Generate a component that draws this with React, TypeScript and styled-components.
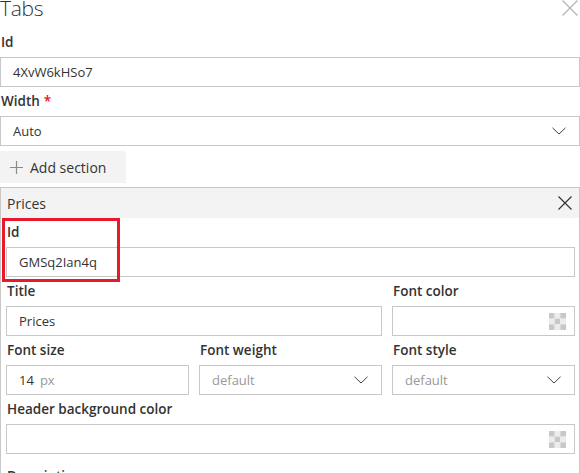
import React from "react";
import styled, { createGlobalStyle } from "styled-components";

const GlobalStyle = createGlobalStyle`
  html, body { margin: 0; padding: 0; background: #ffffff; }
  * { box-sizing: border-box; }
`;

const Page = styled.div`
  width: 580px;
  height: 473px;
  overflow: hidden;
  font-family: "Open Sans", "Noto Sans", sans-serif;
  color: #333333;
`;

const Header = styled.div`
  display: flex;
  justify-content: space-between;
  align-items: flex-start;
  margin-top: -6px;
  height: 38px;
`;

const Title = styled.h1`
  margin: 0;
  font-size: 21px;
  font-weight: 300;
  line-height: 28px;
  letter-spacing: -0.3px;
  color: #333333;
`;

const CloseBox = styled.div`
  margin-top: 5px;
  margin-right: 2px;
  display: block;
`;

const Field = styled.div<{ $extraTop?: number }>`
  margin-bottom: 4px;
  margin-top: ${(p) => p.$extraTop ?? 0}px;
  min-width: 0;
`;

const Label = styled.label`
  display: block;
  font-size: 13.5px;
  font-weight: 560;
  line-height: 20px;
  margin: 0 0 5px 1px;
  color: #333333;
  white-space: nowrap;
`;

const Required = styled.span`
  color: #e81123;
  margin-left: 4px;
`;

const Box = styled.div`
  height: 30px;
  border: 1px solid #c8c8c8;
  background: #ffffff;
  display: flex;
  align-items: center;
  padding: 0 8px 0 12px;
  font-size: 13px;
  color: #333333;
`;

const Value = styled.span<{ $muted?: boolean }>`
  flex: 1;
  color: ${(p) => (p.$muted ? "#999999" : "#333333")};
`;

const Unit = styled.span`
  color: #999999;
  margin-left: 6px;
`;

const AddButton = styled.button`
  display: flex;
  align-items: center;
  gap: 7px;
  height: 32px;
  width: 126px;
  margin: 5px 0 4px 0;
  padding: 0 0 0 10px;
  border: none;
  background: #f3f3f3;
  font-family: inherit;
  font-size: 14px;
  color: #333333;
  cursor: pointer;
`;

const Section = styled.div`
  position: relative;
  border: 1px solid #c8c8c8;
`;

const SectionHeader = styled.div`
  display: flex;
  align-items: center;
  justify-content: space-between;
  height: 30px;
  background: #f3f3f3;
  padding: 0 7px 0 6px;
  font-size: 14px;
  color: #333333;
`;

const SectionBody = styled.div`
  padding: 4px 4px 0 5px;
`;

const Grid = styled.div`
  display: grid;
  grid-template-columns: repeat(3, minmax(0, 1fr));
  column-gap: 10px;
`;

const Span2 = styled(Field)`
  grid-column: span 2;
`;

const Highlight = styled.div`
  position: absolute;
  top: 30px;
  left: 1px;
  width: 118px;
  height: 64px;
  border: 3px solid #e8192c;
  pointer-events: none;
`;

const Checker = () => (
  <svg width="17" height="17" viewBox="0 0 18 18">
    {[0, 1, 2].map((r) =>
      [0, 1, 2].map((c) => (
        <rect
          key={`${r}-${c}`}
          x={c * 6}
          y={r * 6}
          width="6"
          height="6"
          fill={(r + c) % 2 === 0 ? "#c8c8c8" : "#ececec"}
        />
      ))
    )}
  </svg>
);

const Chevron = () => (
  <svg width="14" height="8" viewBox="0 0 14 8" style={{ marginRight: 5 }}>
    <path d="M0.5 0.8 L7 7 L13.5 0.8" fill="none" stroke="#444" strokeWidth="1" />
  </svg>
);

const XIcon = ({ size, color }: { size: number; color: string }) => (
  <svg width={size} height={size} viewBox={`0 0 ${size} ${size}`}>
    <path
      d={`M0.5 0.5 L${size - 0.5} ${size - 0.5} M${size - 0.5} 0.5 L0.5 ${size - 0.5}`}
      stroke={color}
      strokeWidth="1.2"
      fill="none"
    />
  </svg>
);

export default function App() {
  return (
    <Page>
      <GlobalStyle />
      <Header>
        <Title>Tabs</Title>
        <CloseBox>
          <XIcon size={16} color="#b4b4b4" />
        </CloseBox>
      </Header>
      <Field>
        <Label>Id</Label>
        <Box>
          <Value>4XvW6kHSo7</Value>
        </Box>
      </Field>
      <Field>
        <Label>
          Width<Required>*</Required>
        </Label>
        <Box>
          <Value>Auto</Value>
          <Chevron />
        </Box>
      </Field>
      <AddButton>
        <svg width="13" height="13" viewBox="0 0 13 13">
          <path d="M6.5 0 V13 M0 6.5 H13" stroke="#8a8a8a" strokeWidth="1.2" />
        </svg>
        Add section
      </AddButton>
      <Section>
        <SectionHeader>
          <span>Prices</span>
          <XIcon size={14} color="#333" />
        </SectionHeader>
        <SectionBody>
          <Field>
            <Label>Id</Label>
            <Box>
              <Value>GMSq2Ian4q</Value>
            </Box>
          </Field>
          <Grid>
            <Span2>
              <Label>Title</Label>
              <Box>
                <Value>Prices</Value>
              </Box>
            </Span2>
            <Field>
              <Label>Font color</Label>
              <Box>
                <Value />
                <Checker />
              </Box>
            </Field>
            <Field>
              <Label>Font size</Label>
              <Box>
                <Value>
                  14<Unit>px</Unit>
                </Value>
              </Box>
            </Field>
            <Field>
              <Label>Font weight</Label>
              <Box>
                <Value $muted>default</Value>
                <Chevron />
              </Box>
            </Field>
            <Field>
              <Label>Font style</Label>
              <Box>
                <Value $muted>default</Value>
                <Chevron />
              </Box>
            </Field>
          </Grid>
          <Field>
            <Label>Header background color</Label>
            <Box>
              <Value />
              <Checker />
            </Box>
          </Field>
          <Field $extraTop={12}>
            <Label>Description</Label>
            <Box />
          </Field>
        </SectionBody>
        <Highlight />
      </Section>
    </Page>
  );
}
